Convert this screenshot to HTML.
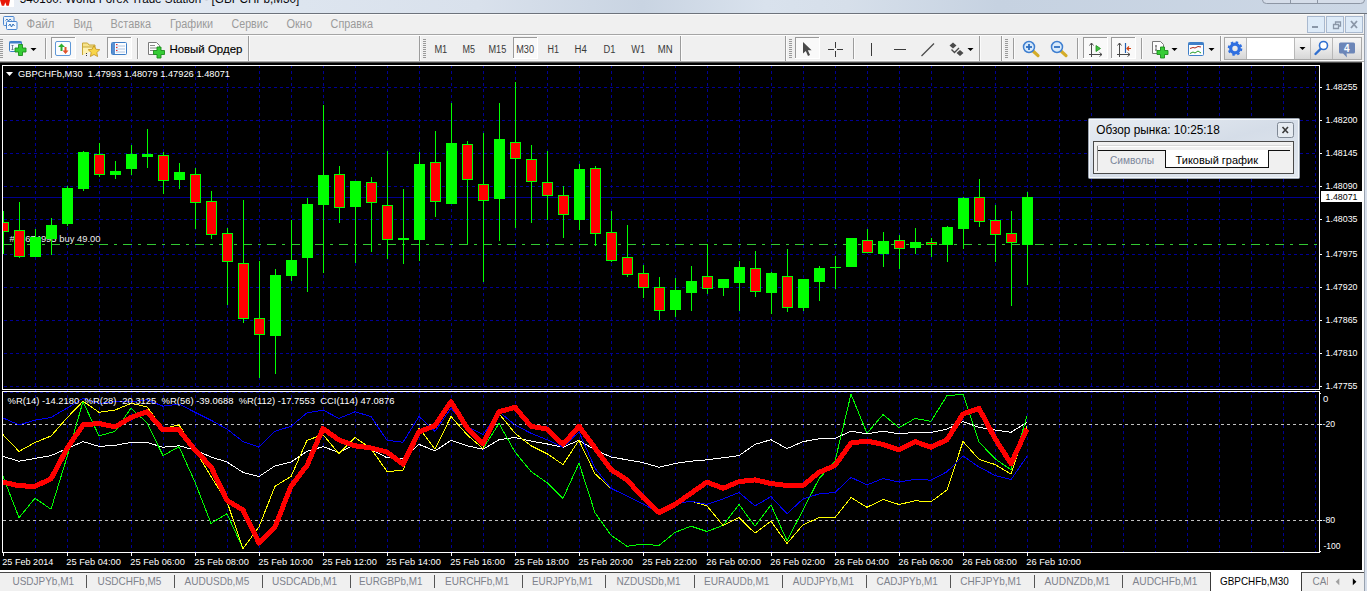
<!DOCTYPE html>
<html><head><meta charset="utf-8"><title>540160: World Forex Trade Station - [GBPCHFb,M30]</title>
<style>
html,body{margin:0;padding:0;}
body{width:1367px;height:591px;overflow:hidden;position:relative;background:#f0f0f0;font-family:"Liberation Sans", sans-serif;}
svg{display:block}
svg text{white-space:pre}
</style></head><body>
<svg width="1367" height="591" viewBox="0 0 1367 591" style="position:absolute;left:0;top:0" font-family='"Liberation Sans", sans-serif'><defs><clipPath id="indclip"><rect x="3" y="392" width="1316" height="160"/></clipPath></defs>
<defs><linearGradient id="tg" x1="0" x2="1" y1="0" y2="0"><stop offset="0" stop-color="#e9eef5"/><stop offset="0.22" stop-color="#dde5ef"/><stop offset="0.35" stop-color="#d9e1ec"/><stop offset="0.47" stop-color="#c9d4e2"/><stop offset="0.56" stop-color="#d9e2ed"/><stop offset="0.62" stop-color="#d6dfea"/><stop offset="0.73" stop-color="#c6d2e1"/><stop offset="1" stop-color="#ccd7e5"/></linearGradient><linearGradient id="bg" x1="0" x2="0" y1="0" y2="1"><stop offset="0" stop-color="#f6f6f6"/><stop offset="0.5" stop-color="#eaeaea"/><stop offset="1" stop-color="#d6d6d6"/></linearGradient><linearGradient id="pg" x1="0" x2="1" y1="0" y2="1"><stop offset="0" stop-color="#e8edf3"/><stop offset="0.5" stop-color="#d5dde8"/><stop offset="1" stop-color="#e2e8ef"/></linearGradient></defs>
<rect x="0" y="0" width="1367" height="13" fill="url(#tg)"/>
<rect x="0" y="13" width="1367" height="1" fill="#6d737c"/>
<rect x="0" y="14" width="1367" height="48" fill="#f0f0f0"/>
<rect x="0" y="14" width="1367" height="1" fill="#fafafa"/>
<rect x="0" y="34" width="1367" height="1" fill="#a5a5a5"/>
<rect x="0" y="35" width="1367" height="1" fill="#fdfdfd"/>
<rect x="0" y="60" width="1367" height="1" fill="#fafafa"/>
<rect x="0" y="61" width="1367" height="1" fill="#a8a8a8"/>
<rect x="0" y="62" width="1367" height="1" fill="#484848"/>
<rect x="0" y="0" width="14" height="7" fill="#ffffff"/>
<path d="M0 0h10l-1.2 5.700h-2.300l-1.200-3.500l-1.200 3.500h-2.300z" fill="#e81808"/>
<text x="19.7" y="3.3" font-size="12.6" fill="#08080c" textLength="279.5" lengthAdjust="spacingAndGlyphs">540160: World Forex Trade Station - [GBPCHFb,M30]</text>
<path d="M1262.5 -3v3q0 3.5 4 3.5h94q4 0 4 -3.5v-3" fill="#d5dde9" stroke="#8d96a4" stroke-width="1"/>
<rect x="1290" y="0" width="1" height="4" fill="#8d96a4"/>
<rect x="1317" y="0" width="1" height="4" fill="#8d96a4"/>
<rect x="3.500" y="16.500" width="10.500" height="9" rx="1" fill="#eaf2fb" stroke="#4a86d0"/><path d="M5.500 20.500l1.500-1.500l1.500 2l1.500-2l1.500 1.500" fill="none" stroke="#2f6fb8" stroke-width="0.900"/><rect x="6.500" y="21.500" width="10.500" height="8" rx="1" fill="#f4f9ff" stroke="#4a86d0"/><path d="M8.500 26l1.500-2l1.500 3l1.500-3l1.500 2" fill="none" stroke="#2f6fb8" stroke-width="1"/>
<text x="26.6" y="28" font-size="12" fill="#9b9b9b" textLength="27.8" lengthAdjust="spacingAndGlyphs">Файл</text>
<text x="73.5" y="28" font-size="12" fill="#9b9b9b" textLength="18.5" lengthAdjust="spacingAndGlyphs">Вид</text>
<text x="110.6" y="28" font-size="12" fill="#9b9b9b" textLength="40.4" lengthAdjust="spacingAndGlyphs">Вставка</text>
<text x="170" y="28" font-size="12" fill="#9b9b9b" textLength="43" lengthAdjust="spacingAndGlyphs">Графики</text>
<text x="231.6" y="28" font-size="12" fill="#9b9b9b" textLength="36.4" lengthAdjust="spacingAndGlyphs">Сервис</text>
<text x="286.5" y="28" font-size="12" fill="#9b9b9b" textLength="25.5" lengthAdjust="spacingAndGlyphs">Окно</text>
<text x="330.6" y="28" font-size="12" fill="#9b9b9b" textLength="42.4" lengthAdjust="spacingAndGlyphs">Справка</text>
<rect x="1307.5" y="16.5" width="17" height="16" fill="#deebf8" stroke="#a9b9cf"/>
<rect x="1326.5" y="16.5" width="17" height="16" fill="#deebf8" stroke="#a9b9cf"/>
<rect x="1345.5" y="16.5" width="17" height="16" fill="#deebf8" stroke="#a9b9cf"/>
<rect x="1312" y="26" width="6" height="2" fill="#8b97a8"/>
<path d="M1333.5 24.5h5v4h-5zM1335.5 24v-2h5v4h-2" fill="none" stroke="#8b97a8" stroke-width="1.3"/>
<path d="M1351 21l6 7M1357 21l-6 7" stroke="#8b97a8" stroke-width="1.8"/>
<rect x="0" y="39" width="3" height="1" fill="#9a9a9a"/><rect x="0" y="41" width="3" height="1" fill="#9a9a9a"/><rect x="0" y="43" width="3" height="1" fill="#9a9a9a"/><rect x="0" y="45" width="3" height="1" fill="#9a9a9a"/><rect x="0" y="47" width="3" height="1" fill="#9a9a9a"/><rect x="0" y="49" width="3" height="1" fill="#9a9a9a"/><rect x="0" y="51" width="3" height="1" fill="#9a9a9a"/><rect x="0" y="53" width="3" height="1" fill="#9a9a9a"/><rect x="0" y="55" width="3" height="1" fill="#9a9a9a"/><rect x="0" y="57" width="3" height="1" fill="#9a9a9a"/>
<rect x="9.5" y="41.5" width="12" height="10" rx="1" fill="#f2f7fd" stroke="#3f7fc8"/><rect x="9.5" y="41.5" width="12" height="2" fill="#3f7fc8"/><path d="M12.5 45v5M11.5 46l1-1l1 1M11.5 49l1 1l1-1" stroke="#5a6a80" stroke-width="0.8" fill="none"/>
<path d="M18.5 44.5h4v3.5h3.5v4h-3.5v3.5h-4v-3.5h-3.5v-4h3.5z" fill="#35cc35" stroke="#1c8c1c" stroke-width="0.9" stroke-linejoin="miter"/>
<path d="M30.5 48h6l-3 3z" fill="#000"/>
<rect x="45" y="38" width="1" height="21" fill="#9c9c9c"/><rect x="46" y="38" width="1" height="21" fill="#fbfbfb"/>
<rect x="51" y="37" width="25" height="22" fill="#f9f9f9"/><rect x="51" y="37" width="25" height="1" fill="#9a9a9a"/><rect x="51" y="37" width="1" height="22" fill="#9a9a9a"/><rect x="51" y="58" width="25" height="1" fill="#ffffff"/><rect x="75" y="37" width="1" height="22" fill="#ffffff"/>
<rect x="55.5" y="41.5" width="15" height="14" rx="1.5" fill="#fbfdff" stroke="#5f98d8"/><path d="M60.5 51v-4h-2.5l3.5-3.5l3.500 3.5h-2.5v4z" fill="#2fae2f"/><path d="M64.500 47v3.500h-2l3 3.500l3-3.500h-2v-3.500z" fill="#e0522a"/>
<path d="M82.500 55v-12h5l1.500 2h6v3" fill="#f7e38c" stroke="#c8a838"/><path d="M82.500 55v-8h12v3" fill="#fdf1b0" stroke="#c8a838"/><path d="M94 45.500l1.800 3.700l4 0.500l-3 2.800l0.800 4l-3.600-2l-3.600 2l0.800-4l-3-2.800l4-0.500z" fill="#f8d548" stroke="#c09020" stroke-width="0.8"/><path d="M86.500 53v4" stroke="#333" stroke-dasharray="1 1"/>
<rect x="107" y="37" width="25" height="22" fill="#f9f9f9"/><rect x="107" y="37" width="25" height="1" fill="#9a9a9a"/><rect x="107" y="37" width="1" height="22" fill="#9a9a9a"/><rect x="107" y="58" width="25" height="1" fill="#ffffff"/><rect x="131" y="37" width="1" height="22" fill="#ffffff"/>
<rect x="111.500" y="42.500" width="15" height="12" rx="1" fill="#fbfdff" stroke="#3f7fc8"/><rect x="112" y="43" width="3" height="11" fill="#5a8fd0"/><path d="M116 46h9M116 49h9M116 52h9" stroke="#b0c4e0" stroke-width="1"/><path d="M116 44.500h1.500M116 47.500h1.500M116 50.500h1.500" stroke="#e03030" stroke-width="1"/>
<rect x="137" y="38" width="1" height="21" fill="#9c9c9c"/><rect x="138" y="38" width="1" height="21" fill="#fbfbfb"/>
<path d="M148.500 42.500h8l3 3v9h-11z" fill="#fdfdfd" stroke="#7a7a7a"/><path d="M150 45.500h5M150 48h7M150 50.500h4" stroke="#8a8a8a" stroke-width="1"/>
<path d="M157 47.0h4v3.5h3.5v4h-3.5v3.5h-4v-3.5h-3.5v-4h3.5z" fill="#35cc35" stroke="#1c8c1c" stroke-width="0.9" stroke-linejoin="miter"/>
<text x="169.4" y="52.5" font-size="11" fill="#000" textLength="73" lengthAdjust="spacingAndGlyphs" stroke="#000" stroke-width="0.12">Новый Ордер</text>
<rect x="248" y="36" width="1" height="25" fill="#9c9c9c"/><rect x="249" y="36" width="1" height="25" fill="#fbfbfb"/>
<rect x="419" y="36" width="1" height="25" fill="#9c9c9c"/><rect x="420" y="36" width="1" height="25" fill="#fbfbfb"/>
<rect x="423" y="39" width="3" height="1" fill="#9a9a9a"/><rect x="423" y="41" width="3" height="1" fill="#9a9a9a"/><rect x="423" y="43" width="3" height="1" fill="#9a9a9a"/><rect x="423" y="45" width="3" height="1" fill="#9a9a9a"/><rect x="423" y="47" width="3" height="1" fill="#9a9a9a"/><rect x="423" y="49" width="3" height="1" fill="#9a9a9a"/><rect x="423" y="51" width="3" height="1" fill="#9a9a9a"/><rect x="423" y="53" width="3" height="1" fill="#9a9a9a"/><rect x="423" y="55" width="3" height="1" fill="#9a9a9a"/><rect x="423" y="57" width="3" height="1" fill="#9a9a9a"/>
<rect x="513" y="37" width="25" height="22" fill="#f9f9f9"/><rect x="513" y="37" width="25" height="1" fill="#9a9a9a"/><rect x="513" y="37" width="1" height="22" fill="#9a9a9a"/><rect x="513" y="58" width="25" height="1" fill="#ffffff"/><rect x="537" y="37" width="1" height="22" fill="#ffffff"/>
<text x="434.4" y="53" font-size="10" fill="#3a3a3a" textLength="12.9" lengthAdjust="spacingAndGlyphs">M1</text>
<text x="462.5" y="53" font-size="10" fill="#3a3a3a" textLength="12.5" lengthAdjust="spacingAndGlyphs">M5</text>
<text x="488.5" y="53" font-size="10" fill="#3a3a3a" textLength="17.8" lengthAdjust="spacingAndGlyphs">M15</text>
<text x="516.25" y="53" font-size="10" fill="#3a3a3a" textLength="17.8" lengthAdjust="spacingAndGlyphs">M30</text>
<text x="547.5" y="53" font-size="10" fill="#3a3a3a" textLength="11.5" lengthAdjust="spacingAndGlyphs">H1</text>
<text x="574.6" y="53" font-size="10" fill="#3a3a3a" textLength="12.3" lengthAdjust="spacingAndGlyphs">H4</text>
<text x="603.5" y="53" font-size="10" fill="#3a3a3a" textLength="11.9" lengthAdjust="spacingAndGlyphs">D1</text>
<text x="631.25" y="53" font-size="10" fill="#3a3a3a" textLength="13.8" lengthAdjust="spacingAndGlyphs">W1</text>
<text x="657.75" y="53" font-size="10" fill="#3a3a3a" textLength="14.8" lengthAdjust="spacingAndGlyphs">MN</text>
<rect x="680" y="36" width="1" height="25" fill="#9c9c9c"/><rect x="681" y="36" width="1" height="25" fill="#fbfbfb"/>
<rect x="785" y="36" width="1" height="25" fill="#9c9c9c"/><rect x="786" y="36" width="1" height="25" fill="#fbfbfb"/>
<rect x="789" y="39" width="3" height="1" fill="#9a9a9a"/><rect x="789" y="41" width="3" height="1" fill="#9a9a9a"/><rect x="789" y="43" width="3" height="1" fill="#9a9a9a"/><rect x="789" y="45" width="3" height="1" fill="#9a9a9a"/><rect x="789" y="47" width="3" height="1" fill="#9a9a9a"/><rect x="789" y="49" width="3" height="1" fill="#9a9a9a"/><rect x="789" y="51" width="3" height="1" fill="#9a9a9a"/><rect x="789" y="53" width="3" height="1" fill="#9a9a9a"/><rect x="789" y="55" width="3" height="1" fill="#9a9a9a"/><rect x="789" y="57" width="3" height="1" fill="#9a9a9a"/>
<rect x="795" y="37" width="25" height="22" fill="#f9f9f9"/><rect x="795" y="37" width="25" height="1" fill="#9a9a9a"/><rect x="795" y="37" width="1" height="22" fill="#9a9a9a"/><rect x="795" y="58" width="25" height="1" fill="#ffffff"/><rect x="819" y="37" width="1" height="22" fill="#ffffff"/>
<path d="M803 42v11.500l2.800-2.600l2.200 5l2-0.900l-2.200-4.800h3.800z" fill="#4a4a4a"/>
<path d="M828 49.500h6M837 49.500h6M835.500 42v6M835.500 51v6" stroke="#3a3a3a" stroke-width="1"/>
<rect x="853" y="38" width="1" height="21" fill="#9c9c9c"/><rect x="854" y="38" width="1" height="21" fill="#fbfbfb"/>
<rect x="871" y="43" width="1" height="13" fill="#3a3a3a"/>
<rect x="894" y="49" width="12" height="1" fill="#3a3a3a"/>
<path d="M921.500 56l12.500-12.500" stroke="#4a4a4a" stroke-width="1.2"/>
<path d="M949.500 45.500l3.500-3l3.500 3l-3.500 3zM956.500 53l3.500-3l3.500 3l-3.500 3z" fill="#4a4a4a"/><path d="M951.500 49.500l3 3l4.500-4.500" stroke="#4a4a4a" stroke-width="1.400" fill="none"/>
<path d="M967.5 48h6l-3 3z" fill="#000"/>
<rect x="979" y="36" width="1" height="25" fill="#9c9c9c"/><rect x="980" y="36" width="1" height="25" fill="#fbfbfb"/>
<rect x="1001" y="36" width="1" height="25" fill="#9c9c9c"/><rect x="1002" y="36" width="1" height="25" fill="#fbfbfb"/>
<rect x="1005" y="39" width="3" height="1" fill="#9a9a9a"/><rect x="1005" y="41" width="3" height="1" fill="#9a9a9a"/><rect x="1005" y="43" width="3" height="1" fill="#9a9a9a"/><rect x="1005" y="45" width="3" height="1" fill="#9a9a9a"/><rect x="1005" y="47" width="3" height="1" fill="#9a9a9a"/><rect x="1005" y="49" width="3" height="1" fill="#9a9a9a"/><rect x="1005" y="51" width="3" height="1" fill="#9a9a9a"/><rect x="1005" y="53" width="3" height="1" fill="#9a9a9a"/><rect x="1005" y="55" width="3" height="1" fill="#9a9a9a"/><rect x="1005" y="57" width="3" height="1" fill="#9a9a9a"/>
<rect x="1013" y="38" width="1" height="21" fill="#9c9c9c"/><rect x="1014" y="38" width="1" height="21" fill="#fbfbfb"/>
<path d="M1033 51l5 4.600" stroke="#d4ac28" stroke-width="3.200" stroke-linecap="round"/><circle cx="1029" cy="47" r="5.500" fill="#d8eafb" stroke="#3f7fd0" stroke-width="1.5"/><path d="M1026 47h6" stroke="#2f6fc0" stroke-width="1.8"/>
<path d="M1029 44v6" stroke="#2f6fc0" stroke-width="1.800"/>
<path d="M1061 51l5 4.600" stroke="#d4ac28" stroke-width="3.200" stroke-linecap="round"/><circle cx="1057" cy="47" r="5.500" fill="#d8eafb" stroke="#3f7fd0" stroke-width="1.5"/><path d="M1054 47h6" stroke="#2f6fc0" stroke-width="1.8"/>
<rect x="1077" y="38" width="1" height="21" fill="#9c9c9c"/><rect x="1078" y="38" width="1" height="21" fill="#fbfbfb"/>
<rect x="1083" y="37" width="25" height="22" fill="#f9f9f9"/><rect x="1083" y="37" width="25" height="1" fill="#9a9a9a"/><rect x="1083" y="37" width="1" height="22" fill="#9a9a9a"/><rect x="1083" y="58" width="25" height="1" fill="#ffffff"/><rect x="1107" y="37" width="1" height="22" fill="#ffffff"/>
<path d="M1091.500 57v-14M1089 54.500h13M1089.500 45.500l2-2.500l2 2.500M1099.500 52.500l2.500 2l-2.500 2" stroke="#4a4a4a" stroke-width="1" fill="none"/><path d="M1096 45.500l4.500 3l-4.500 3z" fill="#3fc03f" stroke="#1f8f1f" stroke-width="0.8"/>
<rect x="1111" y="37" width="25" height="22" fill="#f9f9f9"/><rect x="1111" y="37" width="25" height="1" fill="#9a9a9a"/><rect x="1111" y="37" width="1" height="22" fill="#9a9a9a"/><rect x="1111" y="58" width="25" height="1" fill="#ffffff"/><rect x="1135" y="37" width="1" height="22" fill="#ffffff"/>
<path d="M1119.500 57v-14M1117 54.500h13M1117.500 45.500l2-2.500l2 2.500M1127.500 52.500l2.500 2l-2.500 2" stroke="#4a4a4a" stroke-width="1" fill="none"/><path d="M1125.500 43v10" stroke="#2060b0" stroke-width="1.2"/><path d="M1131 48.500h-4M1129 46.500l-2 2l2 2" stroke="#d04010" stroke-width="1.2" fill="none"/>
<rect x="1141" y="38" width="1" height="21" fill="#9c9c9c"/><rect x="1142" y="38" width="1" height="21" fill="#fbfbfb"/>
<path d="M1152.500 41.500h8l3 3v9h-11z" fill="#fdfdfd" stroke="#7a7a7a"/><path d="M1156 45v6M1155 46h2M1155 50h2" stroke="#555" stroke-width="0.8"/>
<path d="M1160.5 47.0h4v3.5h3.5v4h-3.5v3.5h-4v-3.5h-3.5v-4h3.5z" fill="#35cc35" stroke="#1c8c1c" stroke-width="0.9" stroke-linejoin="miter"/>
<path d="M1171.5 48h6l-3 3z" fill="#000"/>
<rect x="1188.500" y="42.500" width="15" height="13" rx="1" fill="#fbfdff" stroke="#3f7fc8"/><rect x="1188.500" y="42.500" width="15" height="2.500" fill="#3f7fc8"/><path d="M1190 48.500l3-1l2 0.500l3-1.500l3 0.500" stroke="#b02818" stroke-width="1" fill="none"/><path d="M1190 53.500l3-1.500l2 1l3-2l3 2" stroke="#28a028" stroke-width="1" fill="none"/>
<path d="M1208.5 48h6l-3 3z" fill="#000"/>
<rect x="1220" y="36" width="1" height="25" fill="#9c9c9c"/><rect x="1221" y="36" width="1" height="25" fill="#fbfbfb"/>
<rect x="1224.500" y="37.500" width="137" height="22" fill="url(#bg)" stroke="#a8a8a8"/>
<rect x="1246" y="38" width="48" height="21" fill="#ffffff"/>
<rect x="1246" y="38" width="1" height="21" fill="#b8b8b8"/>
<rect x="1294" y="38" width="1" height="21" fill="#b8b8b8"/>
<rect x="1310" y="38" width="1" height="21" fill="#b8b8b8"/>
<rect x="1332" y="38" width="1" height="21" fill="#b8b8b8"/>
<g transform="translate(1235 48.500)"><circle r="4.300" fill="none" stroke="#2f6fe0" stroke-width="3.200"/><circle r="6.300" fill="none" stroke="#2f6fe0" stroke-width="2" stroke-dasharray="2.470 2.470"/></g>
<path d="M1299.5 47h6l-3 3z" fill="#000"/>
<circle cx="1323.500" cy="45.500" r="4" fill="#fff" stroke="#2f6fd0" stroke-width="1.600"/><path d="M1320.500 49l-5 5" stroke="#2f6fd0" stroke-width="2.400" stroke-linecap="round"/>
<path d="M1340.500 42.500h13q1.500 0 1.500 1.500v8q0 1.500-1.500 1.500h-7l0.500 4l-4-4h-2.500q-1.500 0-1.500-1.500v-8q0-1.500 1.500-1.500z" fill="#6c86b8"/>
<text x="1344" y="52" font-size="10" fill="#fff" font-weight="bold">4</text>
<rect x="1362" y="62" width="2" height="529" fill="#ffffff"/>
<rect x="1364" y="14" width="1" height="577" fill="#98a1ae"/>
<rect x="1365" y="14" width="2" height="577" fill="#d6deea"/>
<rect x="0" y="570" width="1364" height="2" fill="#ffffff"/>
<rect x="0" y="572" width="1364" height="1" fill="#484848"/>
<rect x="0" y="573" width="1364" height="18" fill="#f0f0f0"/>
<text x="12.5" y="585" font-size="11" fill="#7e828c" textLength="61.5" lengthAdjust="spacingAndGlyphs">USDJPYb,M1</text>
<text x="97.5" y="585" font-size="11" fill="#7e828c" textLength="63.8" lengthAdjust="spacingAndGlyphs">USDCHFb,M5</text>
<text x="184.5" y="585" font-size="11" fill="#7e828c" textLength="64.8" lengthAdjust="spacingAndGlyphs">AUDUSDb,M5</text>
<text x="272" y="585" font-size="11" fill="#7e828c" textLength="65" lengthAdjust="spacingAndGlyphs">USDCADb,M1</text>
<text x="359" y="585" font-size="11" fill="#7e828c" textLength="63.5" lengthAdjust="spacingAndGlyphs">EURGBPb,M1</text>
<text x="445" y="585" font-size="11" fill="#7e828c" textLength="64" lengthAdjust="spacingAndGlyphs">EURCHFb,M1</text>
<text x="532" y="585" font-size="11" fill="#7e828c" textLength="60.8" lengthAdjust="spacingAndGlyphs">EURJPYb,M1</text>
<text x="616.5" y="585" font-size="11" fill="#7e828c" textLength="64.2" lengthAdjust="spacingAndGlyphs">NZDUSDb,M1</text>
<text x="704" y="585" font-size="11" fill="#7e828c" textLength="65.5" lengthAdjust="spacingAndGlyphs">EURAUDb,M1</text>
<text x="792.75" y="585" font-size="11" fill="#7e828c" textLength="61.2" lengthAdjust="spacingAndGlyphs">AUDJPYb,M1</text>
<text x="876.5" y="585" font-size="11" fill="#7e828c" textLength="61.2" lengthAdjust="spacingAndGlyphs">CADJPYb,M1</text>
<text x="960.25" y="585" font-size="11" fill="#7e828c" textLength="61.2" lengthAdjust="spacingAndGlyphs">CHFJPYb,M1</text>
<text x="1044.5" y="585" font-size="11" fill="#7e828c" textLength="65.5" lengthAdjust="spacingAndGlyphs">AUDNZDb,M1</text>
<text x="1132.5" y="585" font-size="11" fill="#7e828c" textLength="65.0" lengthAdjust="spacingAndGlyphs">AUDCHFb,M1</text>
<rect x="86" y="575" width="1" height="13" fill="#555555"/>
<rect x="174" y="575" width="1" height="13" fill="#555555"/>
<rect x="262" y="575" width="1" height="13" fill="#555555"/>
<rect x="350" y="575" width="1" height="13" fill="#555555"/>
<rect x="434" y="575" width="1" height="13" fill="#555555"/>
<rect x="522" y="575" width="1" height="13" fill="#555555"/>
<rect x="605" y="575" width="1" height="13" fill="#555555"/>
<rect x="694" y="575" width="1" height="13" fill="#555555"/>
<rect x="782" y="575" width="1" height="13" fill="#555555"/>
<rect x="866" y="575" width="1" height="13" fill="#555555"/>
<rect x="950" y="575" width="1" height="13" fill="#555555"/>
<rect x="1034" y="575" width="1" height="13" fill="#555555"/>
<rect x="1122" y="575" width="1" height="13" fill="#555555"/>
<rect x="1210" y="570" width="92" height="21" fill="#ffffff"/>
<rect x="1210" y="572" width="1" height="19" fill="#3a3a3a"/>
<rect x="1301" y="572" width="1" height="19" fill="#3a3a3a"/>
<text x="1220" y="585" font-size="11" fill="#000" textLength="68.75" lengthAdjust="spacingAndGlyphs">GBPCHFb,M30</text>
<clipPath id="cadclip"><rect x="1310" y="572" width="18" height="19"/></clipPath>
<text x="1312.5" y="585" font-size="11" fill="#7e828c" textLength="64" lengthAdjust="spacingAndGlyphs" clip-path="url(#cadclip)">CADCHFb,M1</text>
<path d="M1339.300 578.300l-3.600 3.500l3.600 3.500z" fill="#a0a0a0"/>
<path d="M1352.800 578.300l3.600 3.500l-3.600 3.500z" fill="#000"/>
<!-- chart -->
<rect x="0" y="63" width="1362" height="507" fill="#000"/>
<g stroke="#000096" stroke-width="1" stroke-dasharray="3 3" shape-rendering="crispEdges" fill="none">
<line x1="4" y1="87.5" x2="1316" y2="87.5"/>
<line x1="4" y1="120.5" x2="1316" y2="120.5"/>
<line x1="4" y1="153.5" x2="1316" y2="153.5"/>
<line x1="4" y1="186.5" x2="1316" y2="186.5"/>
<line x1="4" y1="219.5" x2="1316" y2="219.5"/>
<line x1="4" y1="254.5" x2="1316" y2="254.5"/>
<line x1="4" y1="287.5" x2="1316" y2="287.5"/>
<line x1="4" y1="320.5" x2="1316" y2="320.5"/>
<line x1="4" y1="353.5" x2="1316" y2="353.5"/>
<line x1="4" y1="386.5" x2="1316" y2="386.5"/>
<line x1="35.5" y1="65" x2="35.5" y2="552"/>
<line x1="67.5" y1="65" x2="67.5" y2="552"/>
<line x1="99.5" y1="65" x2="99.5" y2="552"/>
<line x1="131.5" y1="65" x2="131.5" y2="552"/>
<line x1="163.5" y1="65" x2="163.5" y2="552"/>
<line x1="195.5" y1="65" x2="195.5" y2="552"/>
<line x1="227.5" y1="65" x2="227.5" y2="552"/>
<line x1="259.5" y1="65" x2="259.5" y2="552"/>
<line x1="291.5" y1="65" x2="291.5" y2="552"/>
<line x1="323.5" y1="65" x2="323.5" y2="552"/>
<line x1="355.5" y1="65" x2="355.5" y2="552"/>
<line x1="387.5" y1="65" x2="387.5" y2="552"/>
<line x1="419.5" y1="65" x2="419.5" y2="552"/>
<line x1="451.5" y1="65" x2="451.5" y2="552"/>
<line x1="483.5" y1="65" x2="483.5" y2="552"/>
<line x1="515.5" y1="65" x2="515.5" y2="552"/>
<line x1="547.5" y1="65" x2="547.5" y2="552"/>
<line x1="579.5" y1="65" x2="579.5" y2="552"/>
<line x1="611.5" y1="65" x2="611.5" y2="552"/>
<line x1="643.5" y1="65" x2="643.5" y2="552"/>
<line x1="675.5" y1="65" x2="675.5" y2="552"/>
<line x1="707.5" y1="65" x2="707.5" y2="552"/>
<line x1="739.5" y1="65" x2="739.5" y2="552"/>
<line x1="771.5" y1="65" x2="771.5" y2="552"/>
<line x1="803.5" y1="65" x2="803.5" y2="552"/>
<line x1="835.5" y1="65" x2="835.5" y2="552"/>
<line x1="867.5" y1="65" x2="867.5" y2="552"/>
<line x1="899.5" y1="65" x2="899.5" y2="552"/>
<line x1="931.5" y1="65" x2="931.5" y2="552"/>
<line x1="963.5" y1="65" x2="963.5" y2="552"/>
<line x1="995.5" y1="65" x2="995.5" y2="552"/>
<line x1="1027.5" y1="65" x2="1027.5" y2="552"/>
<line x1="1059.5" y1="65" x2="1059.5" y2="552"/>
<line x1="1091.5" y1="65" x2="1091.5" y2="552"/>
<line x1="1123.5" y1="65" x2="1123.5" y2="552"/>
<line x1="1155.5" y1="65" x2="1155.5" y2="552"/>
<line x1="1187.5" y1="65" x2="1187.5" y2="552"/>
<line x1="1219.5" y1="65" x2="1219.5" y2="552"/>
<line x1="1251.5" y1="65" x2="1251.5" y2="552"/>
<line x1="1283.5" y1="65" x2="1283.5" y2="552"/>
<line x1="1315.5" y1="65" x2="1315.5" y2="552"/>
<line x1="4" y1="392.5" x2="1316" y2="392.5"/>
</g>
<rect x="3" y="197" width="1316" height="1" fill="#000090"/>
<text x="9.5" y="242" font-size="9.2" fill="#ececec" textLength="91" lengthAdjust="spacingAndGlyphs">#16674995 buy 49.00</text>
<line x1="3" y1="244.5" x2="1319" y2="244.5" stroke="#32c832" stroke-width="1" stroke-dasharray="9 6 3 6" shape-rendering="crispEdges"/>
<g shape-rendering="crispEdges">
<rect x="3" y="211" width="1" height="43" fill="#00ff00"/>
<rect x="3" y="222" width="6" height="10" fill="#00ff00"/>
<rect x="3" y="223" width="5" height="8" fill="#ff0000"/>
<rect x="19" y="202" width="1" height="56" fill="#00ff00"/>
<rect x="14" y="230" width="11" height="27" fill="#00ff00"/>
<rect x="15" y="231" width="9" height="25" fill="#ff0000"/>
<rect x="35" y="229" width="1" height="28" fill="#00ff00"/>
<rect x="30" y="237" width="11" height="20" fill="#00ff00"/>
<rect x="51" y="218" width="1" height="37" fill="#00ff00"/>
<rect x="46" y="225" width="11" height="14" fill="#00ff00"/>
<rect x="67" y="186" width="1" height="40" fill="#00ff00"/>
<rect x="62" y="188" width="11" height="36" fill="#00ff00"/>
<rect x="83" y="151" width="1" height="40" fill="#00ff00"/>
<rect x="78" y="152" width="11" height="37" fill="#00ff00"/>
<rect x="99" y="143" width="1" height="34" fill="#00ff00"/>
<rect x="94" y="154" width="11" height="21" fill="#00ff00"/>
<rect x="95" y="155" width="9" height="19" fill="#ff0000"/>
<rect x="115" y="161" width="1" height="18" fill="#00ff00"/>
<rect x="110" y="171" width="11" height="4" fill="#00ff00"/>
<rect x="131" y="145" width="1" height="30" fill="#00ff00"/>
<rect x="126" y="154" width="11" height="15" fill="#00ff00"/>
<rect x="147" y="129" width="1" height="39" fill="#00ff00"/>
<rect x="142" y="154" width="11" height="3" fill="#00ff00"/>
<rect x="163" y="152" width="1" height="42" fill="#00ff00"/>
<rect x="158" y="155" width="11" height="26" fill="#00ff00"/>
<rect x="159" y="156" width="9" height="24" fill="#ff0000"/>
<rect x="179" y="163" width="1" height="26" fill="#00ff00"/>
<rect x="174" y="172" width="11" height="8" fill="#00ff00"/>
<rect x="195" y="168" width="1" height="61" fill="#00ff00"/>
<rect x="190" y="174" width="11" height="29" fill="#00ff00"/>
<rect x="191" y="175" width="9" height="27" fill="#ff0000"/>
<rect x="211" y="191" width="1" height="48" fill="#00ff00"/>
<rect x="206" y="201" width="11" height="34" fill="#00ff00"/>
<rect x="207" y="202" width="9" height="32" fill="#ff0000"/>
<rect x="227" y="228" width="1" height="77" fill="#00ff00"/>
<rect x="222" y="233" width="11" height="29" fill="#00ff00"/>
<rect x="223" y="234" width="9" height="27" fill="#ff0000"/>
<rect x="243" y="200" width="1" height="123" fill="#00ff00"/>
<rect x="238" y="263" width="11" height="56" fill="#00ff00"/>
<rect x="239" y="264" width="9" height="54" fill="#ff0000"/>
<rect x="259" y="261" width="1" height="117" fill="#00ff00"/>
<rect x="254" y="318" width="11" height="17" fill="#00ff00"/>
<rect x="255" y="319" width="9" height="15" fill="#ff0000"/>
<rect x="275" y="269" width="1" height="105" fill="#00ff00"/>
<rect x="270" y="275" width="11" height="61" fill="#00ff00"/>
<rect x="291" y="220" width="1" height="61" fill="#00ff00"/>
<rect x="286" y="260" width="11" height="16" fill="#00ff00"/>
<rect x="307" y="198" width="1" height="94" fill="#00ff00"/>
<rect x="302" y="204" width="11" height="54" fill="#00ff00"/>
<rect x="323" y="105" width="1" height="168" fill="#00ff00"/>
<rect x="318" y="175" width="11" height="30" fill="#00ff00"/>
<rect x="339" y="166" width="1" height="57" fill="#00ff00"/>
<rect x="334" y="174" width="11" height="34" fill="#00ff00"/>
<rect x="335" y="175" width="9" height="32" fill="#ff0000"/>
<rect x="355" y="181" width="1" height="82" fill="#00ff00"/>
<rect x="350" y="181" width="11" height="26" fill="#00ff00"/>
<rect x="371" y="177" width="1" height="75" fill="#00ff00"/>
<rect x="366" y="182" width="11" height="21" fill="#00ff00"/>
<rect x="367" y="183" width="9" height="19" fill="#ff0000"/>
<rect x="387" y="151" width="1" height="108" fill="#00ff00"/>
<rect x="382" y="205" width="11" height="35" fill="#00ff00"/>
<rect x="383" y="206" width="9" height="33" fill="#ff0000"/>
<rect x="403" y="189" width="1" height="75" fill="#00ff00"/>
<rect x="398" y="238" width="11" height="2" fill="#00ff00"/>
<rect x="419" y="152" width="1" height="109" fill="#00ff00"/>
<rect x="414" y="164" width="11" height="76" fill="#00ff00"/>
<rect x="435" y="131" width="1" height="86" fill="#00ff00"/>
<rect x="430" y="162" width="11" height="40" fill="#00ff00"/>
<rect x="431" y="163" width="9" height="38" fill="#ff0000"/>
<rect x="451" y="103" width="1" height="101" fill="#00ff00"/>
<rect x="446" y="143" width="11" height="61" fill="#00ff00"/>
<rect x="467" y="141" width="1" height="103" fill="#00ff00"/>
<rect x="462" y="144" width="11" height="36" fill="#00ff00"/>
<rect x="463" y="145" width="9" height="34" fill="#ff0000"/>
<rect x="483" y="133" width="1" height="149" fill="#00ff00"/>
<rect x="478" y="184" width="11" height="17" fill="#00ff00"/>
<rect x="479" y="185" width="9" height="15" fill="#ff0000"/>
<rect x="499" y="103" width="1" height="138" fill="#00ff00"/>
<rect x="494" y="139" width="11" height="60" fill="#00ff00"/>
<rect x="515" y="82" width="1" height="146" fill="#00ff00"/>
<rect x="510" y="142" width="11" height="17" fill="#00ff00"/>
<rect x="511" y="143" width="9" height="15" fill="#ff0000"/>
<rect x="531" y="145" width="1" height="78" fill="#00ff00"/>
<rect x="526" y="159" width="11" height="23" fill="#00ff00"/>
<rect x="527" y="160" width="9" height="21" fill="#ff0000"/>
<rect x="547" y="151" width="1" height="69" fill="#00ff00"/>
<rect x="542" y="182" width="11" height="14" fill="#00ff00"/>
<rect x="543" y="183" width="9" height="12" fill="#ff0000"/>
<rect x="563" y="186" width="1" height="52" fill="#00ff00"/>
<rect x="558" y="195" width="11" height="20" fill="#00ff00"/>
<rect x="559" y="196" width="9" height="18" fill="#ff0000"/>
<rect x="579" y="164" width="1" height="66" fill="#00ff00"/>
<rect x="574" y="169" width="11" height="51" fill="#00ff00"/>
<rect x="595" y="166" width="1" height="80" fill="#00ff00"/>
<rect x="590" y="168" width="11" height="66" fill="#00ff00"/>
<rect x="591" y="169" width="9" height="64" fill="#ff0000"/>
<rect x="611" y="211" width="1" height="51" fill="#00ff00"/>
<rect x="606" y="232" width="11" height="29" fill="#00ff00"/>
<rect x="607" y="233" width="9" height="27" fill="#ff0000"/>
<rect x="627" y="225" width="1" height="52" fill="#00ff00"/>
<rect x="622" y="257" width="11" height="18" fill="#00ff00"/>
<rect x="623" y="258" width="9" height="16" fill="#ff0000"/>
<rect x="643" y="265" width="1" height="33" fill="#00ff00"/>
<rect x="638" y="273" width="11" height="15" fill="#00ff00"/>
<rect x="639" y="274" width="9" height="13" fill="#ff0000"/>
<rect x="659" y="277" width="1" height="43" fill="#00ff00"/>
<rect x="654" y="287" width="11" height="24" fill="#00ff00"/>
<rect x="655" y="288" width="9" height="22" fill="#ff0000"/>
<rect x="675" y="278" width="1" height="39" fill="#00ff00"/>
<rect x="670" y="290" width="11" height="20" fill="#00ff00"/>
<rect x="691" y="266" width="1" height="45" fill="#00ff00"/>
<rect x="686" y="281" width="11" height="12" fill="#00ff00"/>
<rect x="707" y="244" width="1" height="50" fill="#00ff00"/>
<rect x="702" y="276" width="11" height="13" fill="#00ff00"/>
<rect x="703" y="277" width="9" height="11" fill="#ff0000"/>
<rect x="723" y="279" width="1" height="17" fill="#00ff00"/>
<rect x="718" y="279" width="11" height="9" fill="#00ff00"/>
<rect x="739" y="261" width="1" height="50" fill="#00ff00"/>
<rect x="734" y="267" width="11" height="16" fill="#00ff00"/>
<rect x="755" y="251" width="1" height="46" fill="#00ff00"/>
<rect x="750" y="268" width="11" height="24" fill="#00ff00"/>
<rect x="751" y="269" width="9" height="22" fill="#ff0000"/>
<rect x="771" y="272" width="1" height="42" fill="#00ff00"/>
<rect x="766" y="273" width="11" height="20" fill="#00ff00"/>
<rect x="787" y="249" width="1" height="63" fill="#00ff00"/>
<rect x="782" y="276" width="11" height="32" fill="#00ff00"/>
<rect x="783" y="277" width="9" height="30" fill="#ff0000"/>
<rect x="803" y="279" width="1" height="32" fill="#00ff00"/>
<rect x="798" y="279" width="11" height="29" fill="#00ff00"/>
<rect x="819" y="266" width="1" height="35" fill="#00ff00"/>
<rect x="814" y="268" width="11" height="14" fill="#00ff00"/>
<rect x="835" y="256" width="1" height="33" fill="#00ff00"/>
<rect x="830" y="267" width="11" height="1" fill="#00ff00"/>
<rect x="851" y="238" width="1" height="29" fill="#00ff00"/>
<rect x="846" y="238" width="11" height="29" fill="#00ff00"/>
<rect x="867" y="229" width="1" height="24" fill="#00ff00"/>
<rect x="862" y="240" width="11" height="13" fill="#00ff00"/>
<rect x="863" y="241" width="9" height="11" fill="#ff0000"/>
<rect x="883" y="232" width="1" height="35" fill="#00ff00"/>
<rect x="878" y="241" width="11" height="13" fill="#00ff00"/>
<rect x="899" y="235" width="1" height="34" fill="#00ff00"/>
<rect x="894" y="240" width="11" height="9" fill="#00ff00"/>
<rect x="895" y="241" width="9" height="7" fill="#ff0000"/>
<rect x="915" y="228" width="1" height="26" fill="#00ff00"/>
<rect x="910" y="242" width="11" height="6" fill="#00ff00"/>
<rect x="931" y="238" width="1" height="19" fill="#00ff00"/>
<rect x="926" y="242" width="11" height="3" fill="#00ff00"/>
<rect x="927" y="243" width="9" height="1" fill="#ff0000"/>
<rect x="947" y="226" width="1" height="36" fill="#00ff00"/>
<rect x="942" y="227" width="11" height="18" fill="#00ff00"/>
<rect x="963" y="197" width="1" height="52" fill="#00ff00"/>
<rect x="958" y="198" width="11" height="31" fill="#00ff00"/>
<rect x="979" y="179" width="1" height="48" fill="#00ff00"/>
<rect x="974" y="197" width="11" height="25" fill="#00ff00"/>
<rect x="975" y="198" width="9" height="23" fill="#ff0000"/>
<rect x="995" y="205" width="1" height="57" fill="#00ff00"/>
<rect x="990" y="220" width="11" height="15" fill="#00ff00"/>
<rect x="991" y="221" width="9" height="13" fill="#ff0000"/>
<rect x="1011" y="211" width="1" height="95" fill="#00ff00"/>
<rect x="1006" y="233" width="11" height="10" fill="#00ff00"/>
<rect x="1007" y="234" width="9" height="8" fill="#ff0000"/>
<rect x="1027" y="192" width="1" height="93" fill="#00ff00"/>
<rect x="1022" y="197" width="11" height="48" fill="#00ff00"/>
</g>
<g stroke="#c0c0c0" stroke-width="1" stroke-dasharray="3 3" shape-rendering="crispEdges">
<line x1="3" y1="424.5" x2="1319" y2="424.5"/>
<line x1="3" y1="520.5" x2="1319" y2="520.5"/>
</g>
<g clip-path="url(#indclip)">
<g shape-rendering="crispEdges">
<polyline points="3,456.4 19,461.2 35,458.4 51,455.6 67,448.6 83,441.6 99,446.4 115,445.3 131,442.5 147,442.5 163,447.2 179,445.8 195,450.0 211,457.0 227,462.0 243,472.4 259,476.5 275,465.9 291,462.0 307,451.4 323,446.7 339,452.4 355,444.4 371,449.2 387,457.8 403,458.4 419,444.4 435,450.9 451,440.3 467,445.8 483,449.2 499,439.7 515,437.5 531,441.1 547,443.9 563,447.2 579,440.3 595,450.0 611,457.0 627,459.8 643,462.6 659,467.3 675,463.5 691,461.2 707,459.8 723,457.8 739,455.6 755,444.4 771,439.7 787,448.6 803,441.6 819,438.9 835,438.3 851,431.3 867,433.8 883,431.3 899,433.8 915,432.4 931,432.4 947,429.1 963,421.5 979,427.4 995,430.0 1011,432.3 1027,422.2" fill="none" stroke="#ffffff" stroke-width="1" stroke-linejoin="round"/>
<polyline points="3,476.5 19,517.6 35,498.3 51,509.2 67,457.0 83,401.7 99,436.0 115,431.3 131,408.1 147,422.9 163,455.6 179,446.7 195,482.1 211,523.4 227,513.7 243,548.6 259,526.8 275,486.3 291,476.5 307,440.3 323,434.7 339,453.7 355,437.5 371,448.6 387,471.5 403,470.4 419,427.7 435,449.2 451,416.5 467,434.7 483,448.6 499,423.5 515,452.0 531,471.5 547,482.7 563,498.3 579,463.1 595,512.8 611,535.2 627,546.3 643,544.1 659,545.5 675,532.4 691,526.2 707,531.5 723,525.4 739,504.5 755,526.2 771,505.0 787,540.8 803,510.0 819,478.8 835,461.2 851,394.2 867,433.3 883,414.6 899,427.7 915,418.5 931,421.3 947,395.6 963,394.4 979,442.0 995,458.7 1011,469.8 1027,416.1" fill="none" stroke="#00ff00" stroke-width="1" stroke-linejoin="round"/>
<polyline points="3,434.7 19,451.4 35,442.5 51,436.0 67,417.9 83,401.2 99,412.3 115,410.1 131,403.4 147,406.8 163,428.5 179,424.9 195,450.0 211,476.5 227,501.7 243,548.6 259,526.8 275,486.3 291,476.5 307,440.3 323,434.7 339,453.7 355,437.5 371,448.6 387,471.5 403,470.4 419,427.7 435,449.2 451,416.5 467,434.7 483,448.6 499,413.7 515,433.3 531,445.8 547,453.7 563,464.5 579,440.3 595,473.8 611,488.3 627,496.0 643,503.9 659,512.8 675,503.9 691,501.1 707,505.9 723,525.4 739,517.6 755,533.2 771,521.2 787,543.5 803,524.8 819,517.6 835,517.6 851,497.5 867,507.3 883,499.4 899,504.5 915,500.8 931,501.7 947,490.0 963,441.5 979,459.3 995,464.5 1011,474.0 1027,426.4" fill="none" stroke="#ffff00" stroke-width="1" stroke-linejoin="round"/>
<polyline points="3,417.9 19,424.9 35,420.2 51,417.4 67,408.1 83,398.4 99,403.4 115,401.7 131,401.7 147,399.8 163,406.2 179,404.0 195,412.3 211,420.2 227,429.1 243,441.6 259,447.2 275,431.3 291,426.3 307,412.9 323,410.1 339,418.4 355,411.8 371,416.5 387,440.3 403,442.2 419,416.5 435,431.3 451,408.1 467,426.3 483,434.7 499,411.8 515,424.9 531,433.3 547,439.7 563,447.2 579,431.9 595,468.2 611,488.3 627,496.0 643,503.9 659,512.8 675,503.9 691,501.1 707,504.5 723,498.9 739,492.5 755,505.9 771,496.6 787,513.7 803,498.9 819,493.9 835,492.5 851,477.4 867,484.9 883,478.5 899,482.1 915,479.3 931,480.2 947,471.7 963,456.0 979,467.0 995,475.4 1011,479.6 1027,456.4" fill="none" stroke="#0000f4" stroke-width="1" stroke-linejoin="round"/>
<polyline points="3,482.1 19,485.8 35,486.3 51,478.8 67,448.6 83,424.9 99,423.5 115,426.9 131,417.4 147,411.8 163,429.9 179,429.9 195,450.0 211,466.8 227,500.3 243,510.0 259,543.0 275,526.8 291,486.3 307,465.4 323,428.5 339,440.0 355,445.8 371,448.0 387,452.0 403,464.0 419,431.9 435,425.7 451,401.7 467,427.7 483,443.6 499,411.8 515,407.3 531,426.3 547,429.1 563,444.4 579,426.3 595,448.0 611,469.6 627,479.9 643,497.5 659,512.5 675,504.5 691,493.3 707,482.1 723,488.3 739,481.6 755,479.9 771,483.5 787,485.5 803,485.5 819,472.4 835,465.4 851,443.0 867,441.1 883,444.4 899,450.0 915,441.6 931,447.2 947,439.8 963,414.0 979,408.4 995,438.5 1011,463.6 1027,428.9" fill="none" stroke="#ff0000" stroke-width="5" stroke-linejoin="round" stroke-linecap="butt"/>
</g>
</g>
<g shape-rendering="crispEdges" fill="#fff">
<rect x="2" y="65" width="1318" height="1" fill="#fff"/>
<rect x="2" y="65" width="1" height="488" fill="#fff"/>
<rect x="1319" y="65" width="1" height="488" fill="#fff"/>
<rect x="2" y="389" width="1318" height="1" fill="#fff"/>
<rect x="2" y="391" width="1318" height="1" fill="#fff"/>
<rect x="2" y="552" width="1318" height="1" fill="#fff"/>
<rect x="2" y="390" width="1" height="1" fill="#000"/>
<rect x="1319" y="390" width="1" height="1" fill="#000"/>
<rect x="1320" y="87" width="2" height="1" fill="#fff"/>
<rect x="1320" y="120" width="2" height="1" fill="#fff"/>
<rect x="1320" y="153" width="2" height="1" fill="#fff"/>
<rect x="1320" y="186" width="2" height="1" fill="#fff"/>
<rect x="1320" y="219" width="2" height="1" fill="#fff"/>
<rect x="1320" y="254" width="2" height="1" fill="#fff"/>
<rect x="1320" y="287" width="2" height="1" fill="#fff"/>
<rect x="1320" y="320" width="2" height="1" fill="#fff"/>
<rect x="1320" y="353" width="2" height="1" fill="#fff"/>
<rect x="1320" y="386" width="2" height="1" fill="#fff"/>
<rect x="1320" y="393" width="1" height="1" fill="#fff"/>
<rect x="1320" y="551" width="1" height="1" fill="#fff"/>
<rect x="1320" y="424" width="2" height="1" fill="#fff"/>
<rect x="1320" y="520" width="2" height="1" fill="#fff"/>
<rect x="3" y="553" width="1" height="3" fill="#fff"/>
<rect x="67" y="553" width="1" height="3" fill="#fff"/>
<rect x="131" y="553" width="1" height="3" fill="#fff"/>
<rect x="195" y="553" width="1" height="3" fill="#fff"/>
<rect x="259" y="553" width="1" height="3" fill="#fff"/>
<rect x="323" y="553" width="1" height="3" fill="#fff"/>
<rect x="387" y="553" width="1" height="3" fill="#fff"/>
<rect x="451" y="553" width="1" height="3" fill="#fff"/>
<rect x="515" y="553" width="1" height="3" fill="#fff"/>
<rect x="579" y="553" width="1" height="3" fill="#fff"/>
<rect x="643" y="553" width="1" height="3" fill="#fff"/>
<rect x="707" y="553" width="1" height="3" fill="#fff"/>
<rect x="771" y="553" width="1" height="3" fill="#fff"/>
<rect x="835" y="553" width="1" height="3" fill="#fff"/>
<rect x="899" y="553" width="1" height="3" fill="#fff"/>
<rect x="963" y="553" width="1" height="3" fill="#fff"/>
<rect x="1027" y="553" width="1" height="3" fill="#fff"/>
</g>
<text x="1325.5" y="90" font-size="9.7" fill="#fff" textLength="32" lengthAdjust="spacingAndGlyphs">1.48255</text>
<text x="1325.5" y="123" font-size="9.7" fill="#fff" textLength="32" lengthAdjust="spacingAndGlyphs">1.48200</text>
<text x="1325.5" y="156" font-size="9.7" fill="#fff" textLength="32" lengthAdjust="spacingAndGlyphs">1.48145</text>
<text x="1325.5" y="189" font-size="9.7" fill="#fff" textLength="32" lengthAdjust="spacingAndGlyphs">1.48090</text>
<text x="1325.5" y="222" font-size="9.7" fill="#fff" textLength="32" lengthAdjust="spacingAndGlyphs">1.48035</text>
<text x="1325.5" y="257" font-size="9.7" fill="#fff" textLength="32" lengthAdjust="spacingAndGlyphs">1.47975</text>
<text x="1325.5" y="290" font-size="9.7" fill="#fff" textLength="32" lengthAdjust="spacingAndGlyphs">1.47920</text>
<text x="1325.5" y="323" font-size="9.7" fill="#fff" textLength="32" lengthAdjust="spacingAndGlyphs">1.47865</text>
<text x="1325.5" y="356" font-size="9.7" fill="#fff" textLength="32" lengthAdjust="spacingAndGlyphs">1.47810</text>
<text x="1325.5" y="389" font-size="9.7" fill="#fff" textLength="32" lengthAdjust="spacingAndGlyphs">1.47755</text>
<rect x="1321" y="191" width="41" height="11" fill="#fff" shape-rendering="crispEdges"/>
<text x="1325.5" y="200" font-size="9.7" fill="#000" textLength="32" lengthAdjust="spacingAndGlyphs">1.48071</text>
<text x="1323" y="402" font-size="9.7" fill="#fff" textLength="5.3" lengthAdjust="spacingAndGlyphs">0</text>
<text x="1322.5" y="427" font-size="9.7" fill="#fff" textLength="12.6" lengthAdjust="spacingAndGlyphs">-20</text>
<text x="1322.5" y="523" font-size="9.7" fill="#fff" textLength="12.6" lengthAdjust="spacingAndGlyphs">-80</text>
<text x="1323.5" y="549" font-size="9.7" fill="#fff" textLength="17" lengthAdjust="spacingAndGlyphs">-100</text>
<path d="M6 72h7l-3.5 4z" fill="#fff"/>
<text x="18" y="77" font-size="9.7" fill="#fff" textLength="212" lengthAdjust="spacingAndGlyphs">GBPCHFb,M30  1.47993 1.48079 1.47926 1.48071</text>
<text x="7.5" y="404" font-size="9.7" fill="#fff" textLength="387" lengthAdjust="spacingAndGlyphs">%R(14) -14.2180  %R(28) -20.3125  %R(56) -39.0688  %R(112) -17.7553  CCI(114) 47.0876</text>
<text x="2.3" y="565.1" font-size="9.7" fill="#fff" textLength="51" lengthAdjust="spacingAndGlyphs">25 Feb 2014</text>
<text x="66.3" y="565.1" font-size="9.7" fill="#fff" textLength="54.5" lengthAdjust="spacingAndGlyphs">25 Feb 04:00</text>
<text x="130.3" y="565.1" font-size="9.7" fill="#fff" textLength="54.5" lengthAdjust="spacingAndGlyphs">25 Feb 06:00</text>
<text x="194.3" y="565.1" font-size="9.7" fill="#fff" textLength="54.5" lengthAdjust="spacingAndGlyphs">25 Feb 08:00</text>
<text x="258.3" y="565.1" font-size="9.7" fill="#fff" textLength="54.5" lengthAdjust="spacingAndGlyphs">25 Feb 10:00</text>
<text x="322.3" y="565.1" font-size="9.7" fill="#fff" textLength="54.5" lengthAdjust="spacingAndGlyphs">25 Feb 12:00</text>
<text x="386.3" y="565.1" font-size="9.7" fill="#fff" textLength="54.5" lengthAdjust="spacingAndGlyphs">25 Feb 14:00</text>
<text x="450.3" y="565.1" font-size="9.7" fill="#fff" textLength="54.5" lengthAdjust="spacingAndGlyphs">25 Feb 16:00</text>
<text x="514.3" y="565.1" font-size="9.7" fill="#fff" textLength="54.5" lengthAdjust="spacingAndGlyphs">25 Feb 18:00</text>
<text x="578.3" y="565.1" font-size="9.7" fill="#fff" textLength="54.5" lengthAdjust="spacingAndGlyphs">25 Feb 20:00</text>
<text x="642.3" y="565.1" font-size="9.7" fill="#fff" textLength="54.5" lengthAdjust="spacingAndGlyphs">25 Feb 22:00</text>
<text x="706.3" y="565.1" font-size="9.7" fill="#fff" textLength="54.5" lengthAdjust="spacingAndGlyphs">26 Feb 00:00</text>
<text x="770.3" y="565.1" font-size="9.7" fill="#fff" textLength="54.5" lengthAdjust="spacingAndGlyphs">26 Feb 02:00</text>
<text x="834.3" y="565.1" font-size="9.7" fill="#fff" textLength="54.5" lengthAdjust="spacingAndGlyphs">26 Feb 04:00</text>
<text x="898.3" y="565.1" font-size="9.7" fill="#fff" textLength="54.5" lengthAdjust="spacingAndGlyphs">26 Feb 06:00</text>
<text x="962.3" y="565.1" font-size="9.7" fill="#fff" textLength="54.5" lengthAdjust="spacingAndGlyphs">26 Feb 08:00</text>
<text x="1026.3" y="565.1" font-size="9.7" fill="#fff" textLength="54.5" lengthAdjust="spacingAndGlyphs">26 Feb 10:00</text>
<!-- popup -->
<rect x="1088.500" y="118.500" width="211" height="60" rx="1" fill="url(#pg)" stroke="#9aa3b0"/>
<rect x="1089.500" y="119.500" width="209" height="58" fill="none" stroke="#f4f7fa"/>
<text x="1096.3" y="134" font-size="12" fill="#000" textLength="123.4" lengthAdjust="spacingAndGlyphs">Обзор рынка: 10:25:18</text>
<rect x="1277.500" y="122.500" width="16" height="15" rx="2" fill="#e6ebf1" stroke="#7f8894"/>
<path d="M1282.500 127l5.500 6M1288 127l-5.500 6" stroke="#3a3a3a" stroke-width="1.600"/>
<rect x="1093.500" y="141.500" width="200" height="32" fill="#f0f0f0" stroke="#4a4a4a"/>
<rect x="1097" y="145" width="194" height="1" fill="#d8d8d8"/>
<rect x="1098" y="146" width="193" height="1" fill="#ffffff"/>
<rect x="1097" y="146" width="1" height="25" fill="#8a8a8a"/>
<rect x="1098" y="150" width="68" height="1" fill="#101010"/>
<rect x="1166" y="150" width="103" height="17" fill="#ffffff"/>
<rect x="1165" y="150" width="1" height="18" fill="#101010"/>
<rect x="1165" y="167" width="104" height="1" fill="#101010"/>
<rect x="1268" y="150" width="1" height="18" fill="#101010"/>
<rect x="1268" y="150" width="22" height="1" fill="#101010"/>
<text x="1110" y="163.5" font-size="11" fill="#7b869a" textLength="44" lengthAdjust="spacingAndGlyphs">Символы</text>
<text x="1175.6" y="163.5" font-size="11" fill="#000" textLength="82.4" lengthAdjust="spacingAndGlyphs">Тиковый график</text>
</svg>
</body></html>
